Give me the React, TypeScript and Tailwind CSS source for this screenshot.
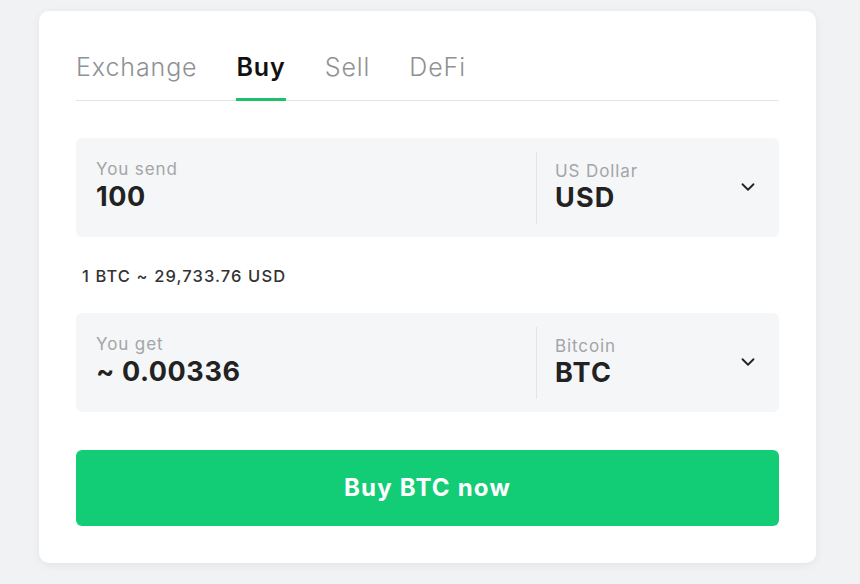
import { ChevronDown } from "lucide-react";

const tabs = ["Exchange", "Buy", "Sell", "DeFi"];

const AmountBox = ({
  label,
  value,
  currencyName,
  currency,
}: {
  label: string;
  value: string;
  currencyName: string;
  currency: string;
}) => (
  <div className="flex h-[99px] items-center rounded-md bg-[#f5f6f7]">
    <div className="flex-1 pl-5 pb-[4px]">
      <p className="text-[17px] leading-[20px] tracking-[0.9px] text-[#a3a5a8]">{label}</p>
      <p className="mt-[2px] text-[27px] font-bold leading-[32px] tracking-[0.6px] text-[#222]">{value}</p>
    </div>
    <div className="h-[72px] w-px bg-[#e3e4e6]" />
    <div className="flex w-[242px] items-center pl-[18px] pr-[20px]">
      <div className="flex-1">
        <p className="text-[17px] leading-[20px] tracking-[0.9px] text-[#a3a5a8]">{currencyName}</p>
        <p className="mt-[1px] text-[27px] font-bold leading-[32px] tracking-[1.2px] text-[#222]">{currency}</p>
      </div>
      <ChevronDown className="mb-[2px] h-[22px] w-[22px] text-[#222]" strokeWidth={2} />
    </div>
  </div>
);

const App = () => {
  return (
    <div
      className="min-h-screen bg-[#f1f2f3] px-[39px] pt-[11px] pb-[21px]"
      style={{ fontFamily: "Inter, 'Open Sans', sans-serif" }}
    >
      <div className="w-[777px] rounded-[10px] bg-white px-[37px] pt-[41px] pb-[37px] shadow-[0_2px_10px_rgba(0,0,0,0.06)]">
        {/* Tabs */}
        <div className="flex gap-[39px] border-b border-[#e3e4e6]">
          {tabs.map((tab) => (
            <div
              key={tab}
              className={
                tab === "Buy"
                  ? "-mb-px border-b-[3px] border-[#1ec16b] pb-[15px] text-[25px] font-semibold leading-[30px] tracking-[0.9px] text-[#111]"
                  : "pb-[18px] text-[25px] font-light leading-[30px] tracking-[0.9px] text-[#8f9194]"
              }
            >
              {tab}
            </div>
          ))}
        </div>

        <div className="mt-[37px]">
          <AmountBox label="You send" value="100" currencyName="US Dollar" currency="USD" />
        </div>

        <p className="mt-[28px] mb-[26px] pl-[6px] text-[16.5px] font-medium leading-[22px] tracking-[1.1px] text-[#333]">
          1 BTC ~ 29,733.76 USD
        </p>

        <AmountBox label="You get" value="~ 0.00336" currencyName="Bitcoin" currency="BTC" />

        <button className="mt-[38px] h-[76px] w-full rounded-md bg-[#12cd76] text-[24px] font-bold tracking-[1.2px] text-white">
          Buy BTC now
        </button>
      </div>
    </div>
  );
};

export default App;
